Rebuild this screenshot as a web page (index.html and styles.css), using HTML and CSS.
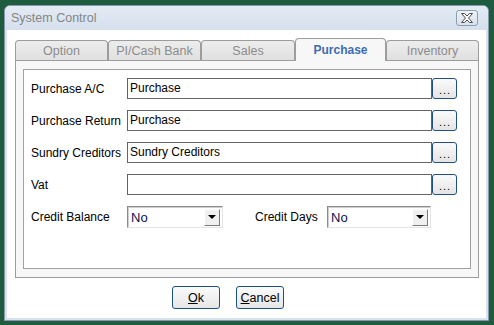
FILE: index.html
```html
<!DOCTYPE html>
<html lang="en">
<head>
    <meta charset="UTF-8">
    <meta name="viewport" content="width=device-width, initial-scale=1.0">
    <title>System Control</title>
    <link rel="stylesheet" href="styles.css">
</head>
<body>
    <div class="window">
        <div class="titlebar">
            <span class="title">System Control</span>
            <a href="#" class="close-btn">
                <svg width="14" height="10" viewBox="0 0 14 10">
                    <path d="M1.5 0.5 H4.5 L7 3 L9.5 0.5 H12.5 L8.5 5 L12.5 9.5 H9.5 L7 7 L4.5 9.5 H1.5 L5.5 5 Z" fill="#fff" stroke="#4a4a4a" stroke-width="1" stroke-linejoin="round"/>
                </svg>
            </a>
        </div>

        <div class="client">
            <!-- Abas -->
            <div class="tabs">
                <div class="tab w93">Option</div>
                <div class="tab w93">PI/Cash Bank</div>
                <div class="tab w94">Sales</div>
                <div class="tab w91 active">Purchase</div>
                <div class="tab w93">Inventory</div>
            </div>

            <div class="tab-panel">
                <div class="group">
                    <div class="row">
                        <label class="label">Purchase A/C</label>
                        <input type="text" class="field" value="Purchase">
                        <button class="dots">...</button>
                    </div>
                    <div class="row">
                        <label class="label">Purchase Return</label>
                        <input type="text" class="field" value="Purchase">
                        <button class="dots">...</button>
                    </div>
                    <div class="row">
                        <label class="label">Sundry Creditors</label>
                        <input type="text" class="field" value="Sundry Creditors">
                        <button class="dots">...</button>
                    </div>
                    <div class="row">
                        <label class="label">Vat</label>
                        <input type="text" class="field" value="">
                        <button class="dots">...</button>
                    </div>
                    <div class="row combo-row">
                        <label class="label">Credit Balance</label>
                        <div class="combo combo-balance">
                            <span class="combo-text">No</span>
                            <span class="combo-arrow"></span>
                        </div>
                        <label class="label label-days">Credit Days</label>
                        <div class="combo combo-days">
                            <span class="combo-text">No</span>
                            <span class="combo-arrow"></span>
                        </div>
                    </div>
                </div>
            </div>

            <div class="actions">
                <button class="btn"><u>O</u>k</button>
                <button class="btn"><u>C</u>ancel</button>
            </div>
        </div>
    </div>
</body>
</html>
```

FILE: styles.css
```css
body {
    font-family: 'Liberation Sans', Arial, sans-serif;
    font-size: 12px;
    margin: 0;
    padding: 5px 0 0 4px;
    background-color: #1f5b3f;
    height: 325px;
    box-sizing: border-box;
    overflow: hidden;
}
.window {
    width: 485px;
    height: 316px;
    box-sizing: border-box;
    border: 1px solid #8798ad;
    border-radius: 6px 6px 0 0;
    background-color: #d9e3ef;
    display: flex;
    flex-direction: column;
}
.titlebar {
    height: 24px;
    display: flex;
    align-items: center;
    justify-content: space-between;
    padding: 0 10px 0 6px;
    background: linear-gradient(#e4ebf4, #d5e0ed);
    border-radius: 5px 5px 0 0;
}
.title {
    color: #858585;
    font-size: 12.5px;
}
.close-btn {
    width: 22px;
    height: 16px;
    box-sizing: border-box;
    border: 1px solid #8d9db2;
    border-radius: 3px;
    background: linear-gradient(#eef2f7, #d8e1ec);
    display: flex;
    align-items: center;
    justify-content: center;
}
.client {
    flex: 1;
    margin: 0 2px 2px 2px;
    background-color: #fff;
    padding: 8px 0 0 8px;
}
/* Abas */
.tabs {
    display: flex;
    align-items: flex-end;
    height: 22px;
}
.tab {
    height: 20px;
    box-sizing: border-box;
    border: 1px solid #9c9c9c;
    border-bottom: none;
    border-radius: 4px 4px 0 0;
    background: linear-gradient(#ededed, #e0e0e0);
    color: #8c8c8c;
    font-size: 12.5px;
    display: flex;
    align-items: center;
    justify-content: center;
    padding-top: 1px;
}
.w91 { width: 91px; }
.w93 { width: 93px; }
.w94 { width: 94px; }
.tab.active {
    height: 23px;
    margin-bottom: -1px;
    position: relative;
    background: #f7f7f7;
    color: #3d6cb3;
    font-weight: bold;
    font-size: 12px;
    padding-top: 0;
}
.tab-panel {
    width: 464px;
    height: 218px;
    box-sizing: border-box;
    border: 1px solid #9c9c9c;
    background-color: #f7f7f7;
    padding: 8px 7px 8px 7px;
}
.group {
    height: 100%;
    box-sizing: border-box;
    border: 1px solid #a0a0a0;
    background-color: #fff;
    padding: 8px 0 0 7px;
    display: flex;
    flex-direction: column;
    gap: 11px;
}
.row {
    display: flex;
    align-items: center;
    height: 21px;
}
.label {
    width: 96px;
    flex-shrink: 0;
    color: #000;
    white-space: nowrap;
}
.field {
    width: 305px;
    height: 21px;
    box-sizing: border-box;
    border: 1px solid #646464;
    padding: 0 2px 2px 2px;
    font-family: inherit;
    font-size: 12px;
    color: #000;
    outline: none;
}
.dots {
    width: 25px;
    height: 21px;
    box-sizing: border-box;
    border: 1px solid #1f4f85;
    border-radius: 3px;
    background: linear-gradient(#fbfbfb, #e4e4e4);
    font-family: inherit;
    font-size: 11px;
    letter-spacing: 1px;
    color: #000;
    padding: 4px 0 0 1px;
    line-height: 1;
}
.combo-row {
    height: 22px;
}
.combo {
    height: 22px;
    box-sizing: border-box;
    border: 1px solid;
    border-color: #8a8a8a #e3e3e3 #e3e3e3 #8a8a8a;
    box-shadow: inset 1px 1px 0 #cfcfcf;
    background-color: #fff;
    display: flex;
    align-items: center;
    justify-content: space-between;
    padding: 1px 2px 1px 2px;
}
.combo-balance { width: 96px; }
.combo-days { width: 104px; }
.combo-text {
    color: #11114d;
    font-size: 13px;
    padding-left: 1px;
}
.combo-arrow {
    width: 16px;
    height: 17px;
    box-sizing: border-box;
    background-color: #f0f0f0;
    border: 1px solid;
    border-color: #fff #7a7a7a #7a7a7a #fff;
    display: flex;
    align-items: center;
    justify-content: center;
}
.combo-arrow::after {
    content: "";
    border-left: 4px solid transparent;
    border-right: 4px solid transparent;
    border-top: 4px solid #000;
}
.label-days {
    width: 72px;
    margin-left: 32px;
}
.actions {
    display: flex;
    gap: 16px;
    padding: 8px 0 0 157px;
}
.btn {
    width: 48px;
    height: 23px;
    box-sizing: border-box;
    border: 1px solid #1f4f85;
    border-radius: 3px;
    background: linear-gradient(#fbfbfb, #e6e6e6);
    font-family: inherit;
    font-size: 12.5px;
    color: #000;
    padding: 0;
}
```
